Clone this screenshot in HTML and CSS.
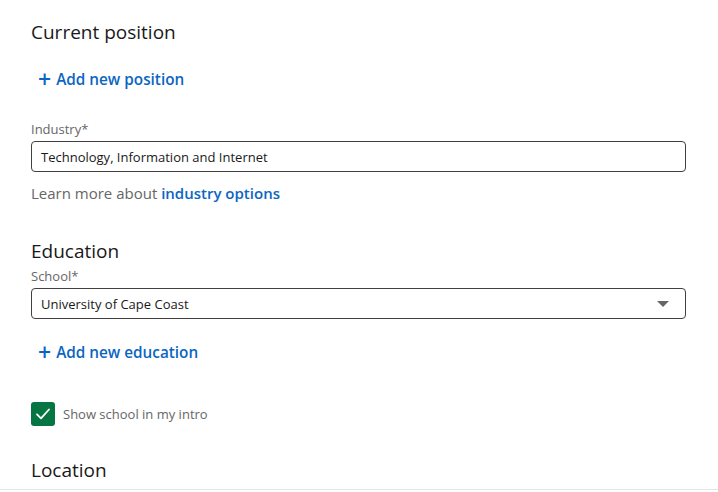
FILE: index.html
```html
<!DOCTYPE html>
<html>
<head>
<meta charset="utf-8">
<link rel="stylesheet" href="styles.css">
</head>
<body>
<div class="form">
  <section class="section">
    <h2 class="heading">Current position</h2>
    <a class="add-link add-position"><span class="plus">+</span>Add new position</a>
    <div class="field industry">
      <label class="label">Industry*</label>
      <div class="input">Technology, Information and Internet</div>
    </div>
    <p class="help">Learn more about <a class="help-link">industry options</a></p>
  </section>
  <section class="section education">
    <h2 class="heading">Education</h2>
    <div class="field school">
      <label class="label">School*</label>
      <div class="input select">University of Cape Coast<span class="caret"></span></div>
    </div>
    <a class="add-link add-education"><span class="plus">+</span>Add new education</a>
    <div class="check-row">
      <span class="checkbox"><svg width="18" height="18" viewBox="0 0 18 18"><path d="M3 9.3 L7 13.3 L15 4.5" fill="none" stroke="#fff" stroke-width="1.8" stroke-linecap="round" stroke-linejoin="round"/></svg></span>
      <span class="check-label">Show school in my intro</span>
    </div>
  </section>
  <section class="section location">
    <h2 class="heading">Location</h2>
  </section>
</div>
</body>
</html>
```
FILE: styles.css
```css
* { box-sizing: border-box; }
html, body { margin: 0; padding: 0; background: #fff; }
body {
  font-family: "Open Sans", "Noto Sans", sans-serif;
  color: #191919;
  width: 718px;
  height: 492px;
  overflow: hidden;
}
.form {
  height: 490px;
  border-bottom: 1px solid #e6e6e6;
  padding: 0 32px 0 31px;
  overflow: hidden;
}
.heading {
  margin: 0;
  font-size: 19px;
  font-weight: 400;
  line-height: 24px;
  color: #191919;
}
.section:first-child .heading { padding-top: 20px; }
.add-link {
  display: flex;
  align-items: center;
  font-size: 15.3px;
  font-weight: 600;
  color: #0a66c2;
  line-height: 20px;
  padding-left: 7px;
}
.plus {
  font-size: 23px;
  font-weight: 600;
  margin-right: 5px;
  line-height: 20px;
}
.add-position { margin-top: 25px; }
.field { display: flex; flex-direction: column; }
.industry { margin-top: 31px; }
.label {
  font-size: 13px;
  color: #666;
  line-height: 18px;
  margin-bottom: 3px;
}
.input {
  position: relative;
  height: 31px;
  border: 1px solid #404040;
  border-radius: 4px;
  padding: 0 9px;
  display: flex;
  align-items: center;
  font-size: 13px;
  color: #191919;
}
.caret {
  position: absolute;
  right: 16px;
  top: 12px;
  width: 0;
  height: 0;
  border-left: 6px solid transparent;
  border-right: 6px solid transparent;
  border-top: 6px solid #666;
}
.help {
  margin: 10px 0 0;
  font-size: 15px;
  color: #666;
  line-height: 22px;
}
.help-link { color: #0a66c2; font-weight: 600; }
.education { margin-top: 35px; }
.school { margin-top: 4px; }
.add-education { margin-top: 23px; }
.check-row {
  display: flex;
  align-items: center;
  margin-top: 40px;
}
.checkbox {
  width: 24px;
  height: 24px;
  border-radius: 3px;
  background: #057642;
  display: flex;
  align-items: center;
  justify-content: center;
  margin-right: 8px;
}
.check-label { font-size: 13px; color: #666; }
.location { margin-top: 32px; }
```
